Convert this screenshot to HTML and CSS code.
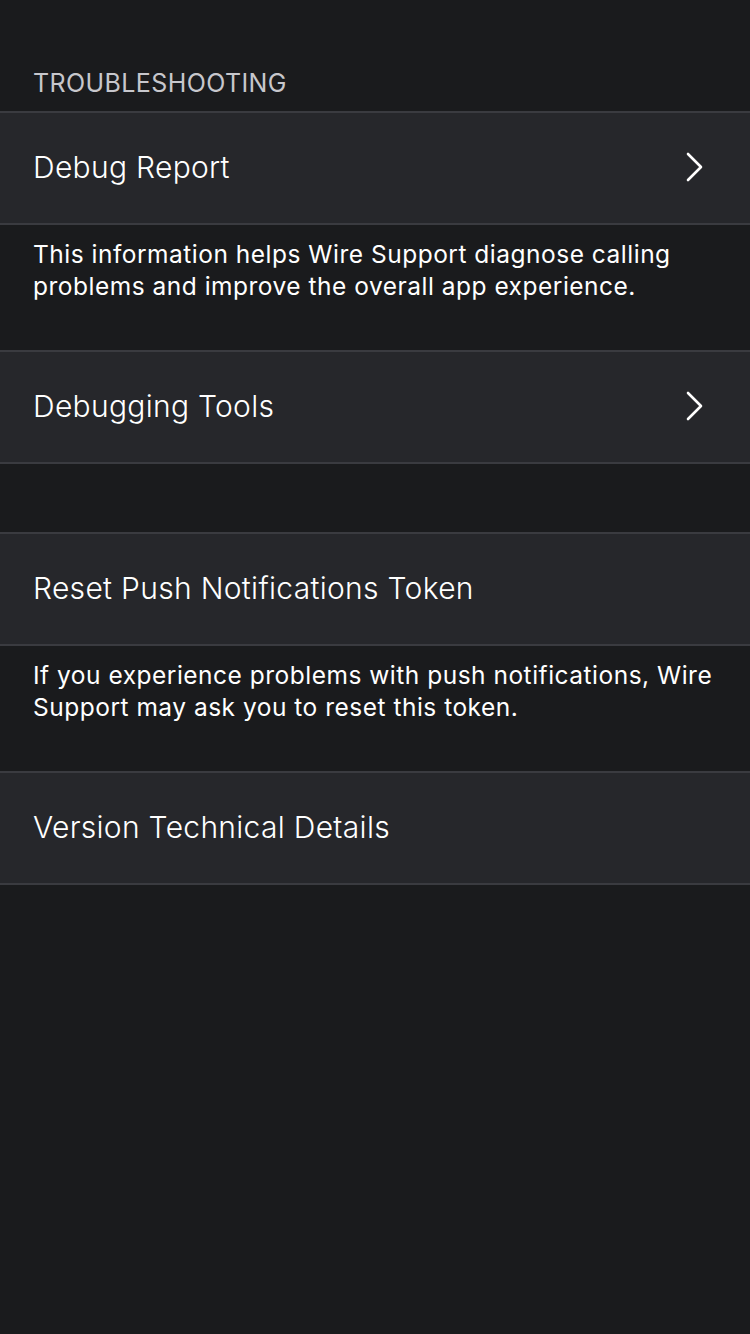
FILE: index.html
```html
<!DOCTYPE html>
<html>
<head>
<meta charset="utf-8">
<link rel="stylesheet" href="styles.css">
</head>
<body>
<div class="screen">
  <div class="section-header">TROUBLESHOOTING</div>
  <div class="group">
    <div class="cell">
      <span class="cell-title">Debug Report</span>
      <svg class="chevron" width="22" height="30" viewBox="0 0 22 30"><path d="M4 2 L17 15 L4 28" fill="none" stroke="#ffffff" stroke-width="2.6" stroke-linecap="round" stroke-linejoin="round"/></svg>
    </div>
  </div>
  <div class="footer">This information helps Wire Support diagnose calling problems and improve the overall app experience.</div>
  <div class="group">
    <div class="cell">
      <span class="cell-title">Debugging Tools</span>
      <svg class="chevron" width="22" height="30" viewBox="0 0 22 30"><path d="M4 2 L17 15 L4 28" fill="none" stroke="#ffffff" stroke-width="2.6" stroke-linecap="round" stroke-linejoin="round"/></svg>
    </div>
  </div>
  <div class="spacer"></div>
  <div class="group">
    <div class="cell">
      <span class="cell-title">Reset Push Notifications Token</span>
    </div>
  </div>
  <div class="footer">If you experience problems with push notifications, Wire Support may ask you to reset this token.</div>
  <div class="group">
    <div class="cell">
      <span class="cell-title">Version Technical Details</span>
    </div>
  </div>
</div>
</body>
</html>
```
FILE: styles.css
```css
html, body {
  margin: 0;
  padding: 0;
  background: #1a1b1d;
}
.screen {
  width: 750px;
  min-height: 1334px;
  background: #1a1b1d;
  font-family: Inter, "Noto Sans", sans-serif;
  color: #ffffff;
}
.section-header {
  padding: 67px 33px 0 33px;
  height: 111px;
  box-sizing: border-box;
  font-size: 25px;
  line-height: 32px;
  letter-spacing: 0.4px;
  color: #c7c7cc;
}
.group {
  border-top: 2px solid #3a3b40;
  border-bottom: 2px solid #3a3b40;
  background: #26272b;
}
.cell {
  height: 110px;
  box-sizing: border-box;
  display: flex;
  align-items: center;
  justify-content: space-between;
  padding: 0 44px 3px 33px;
}
.cell-title {
  font-size: 30px;
  font-weight: 300;
  letter-spacing: 0.3px;
  color: #ffffff;
}
.chevron {
  display: block;
}
.footer {
  height: 125px;
  box-sizing: border-box;
  padding: 13px 30px 0 33px;
  font-size: 24.5px;
  line-height: 32px;
  letter-spacing: 0.5px;
  color: #ffffff;
}
.spacer {
  height: 68px;
}
```
